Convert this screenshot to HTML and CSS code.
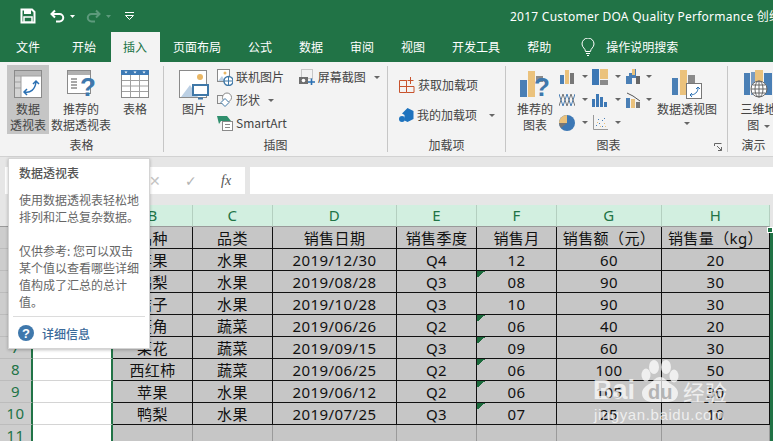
FILE: index.html
```html
<!DOCTYPE html>
<html lang="zh">
<head>
<meta charset="utf-8">
<title>Excel</title>
<link rel="stylesheet" href="styles.css">
</head>
<body>
<div class="app">
  <header class="titlebar">
    <div class="qat">
      <svg class="q-save" width="16" height="16" viewBox="0 0 16 16"><path d="M1.500 1.500h10.500l2.500 2.500v10.500h-13z" fill="none" stroke="#fff" stroke-width="2"/><rect x="4" y="2" width="7" height="4" fill="#fff"/><rect x="4" y="9" width="8" height="5" fill="#217346" stroke="#fff" stroke-width="1.500"/></svg>
      <svg class="q-undo" width="16" height="14" viewBox="0 0 16 14"><path d="M5 1.500 1.500 5 5 8.500M2 5h7.500a3.500 3.500 0 0 1 0 7.500H6" fill="none" stroke="#fff" stroke-width="2"/></svg>
      <svg class="q-caret" width="5" height="3" viewBox="0 0 5 3"><path d="M0 0h5L2.500 3z" fill="#fff"/></svg>
      <svg class="q-redo" width="16" height="14" viewBox="0 0 16 14"><path d="M11 1.500 14.500 5 11 8.500M14 5H6.500a3.500 3.500 0 0 0 0 7.500H10" fill="none" stroke="#5d9a7c" stroke-width="2"/></svg>
      <svg class="q-caret2" width="5" height="3" viewBox="0 0 5 3"><path d="M0 0h5L2.500 3z" fill="#5d9a7c"/></svg>
      <svg class="q-more" width="9" height="8" viewBox="0 0 9 8"><path d="M0 .5h9M.5 3.500h8L4.500 7.500z" fill="none" stroke="#fff"/></svg>
    </div>
    <div class="doc-title">2017 Customer DOA Quality Performance 创维</div>
  </header>

  <nav class="tabs">
    <span class="tab tab-first">文件</span>
    <span class="tab tab-second">开始</span>
    <span class="tab tab-active">插入</span>
    <span class="tab">页面布局</span>
    <span class="tab">公式</span>
    <span class="tab">数据</span>
    <span class="tab">审阅</span>
    <span class="tab">视图</span>
    <span class="tab">开发工具</span>
    <span class="tab">帮助</span>
    <svg class="lamp" width="14" height="18" viewBox="0 0 14 18"><path d="M4.500 13.500C4.500 10.500 1 9.500 1 6a6 6 0 0 1 12 0c0 3.500-3.500 4.500-3.500 7.500zM5 15.500h4M6 17.500h2" fill="none" stroke="#fff"/></svg>
    <span class="tab tab-search">操作说明搜索</span>
  </nav>

  <section class="ribbon">
    <div class="group group-tables">
      <div class="group-body">
        <div class="big big-pivot">
          <svg width="28" height="28" viewBox="0 0 28 28"><rect x=".5" y=".5" width="27" height="27" fill="#fff" stroke="#8a8a8a"/><rect x="1" y="1" width="26" height="5" fill="#b9b9b9"/><rect x="1" y="6" width="6" height="21" fill="#d4d4d4"/><path d="M7 6v21M1 6h26M1 12h6M1 18h6" stroke="#a0a0a0" fill="none"/><path d="M11 22c5 1 10-2 11-10M19 14l3-3 3 3M13 19l-3 3 3 3" fill="none" stroke="#2a70b3" stroke-width="1.500"/></svg>
          <span class="label">数据<br>透视表</span>
        </div>
        <div class="big big-rec">
          <svg width="28" height="30" viewBox="0 0 28 30"><rect x=".5" y=".5" width="23" height="23" fill="#fff" stroke="#8a8a8a"/><path d="M1 3h22" stroke="#b0b0b0" stroke-width="4"/><path d="M4 9h6M4 12h6M4 15h6M4 18h6" stroke="#a8a8a8" stroke-width="2"/><text class="qmark" x="13" y="26">?</text></svg>
          <span class="label">推荐的<br>数据透视表</span>
        </div>
        <div class="big big-table">
          <svg width="28" height="28" viewBox="0 0 28 28"><rect x=".5" y=".5" width="27" height="27" fill="#fff" stroke="#8a8a8a"/><rect x="0" y="0" width="28" height="5" fill="#3d7ab5"/><path d="M1 10.500h26M1 16h26M1 21.500h26M9.500 5v22M18.500 5v22" stroke="#a0a0a0" fill="none"/><path d="M3.500 1.500h3L5 3.500zM12.500 1.500h3L14 3.500zM21.500 1.500h3L23 3.500z" fill="#fff"/></svg>
          <span class="label">表格</span>
        </div>
      </div>
      <div class="group-name">表格</div>
    </div>

    <div class="group group-illus">
      <div class="group-body">
        <div class="big big-pic">
          <svg width="30" height="30" viewBox="0 0 30 30"><rect x=".5" y=".5" width="27" height="27" fill="#fff" stroke="#8a8a8a"/><circle cx="21" cy="7" r="3" fill="#eab765"/><path d="M2 27 11 15l8 12z" fill="#bcd0e4"/><rect x="14" y="15" width="15" height="10" fill="#fff" stroke="#3f78a8" stroke-width="2"/><path d="M19 28.500h5" stroke="#3f78a8" stroke-width="2"/></svg>
          <span class="label">图片</span>
        </div>
        <div class="small-col">
          <div class="small"><svg width="16" height="17" viewBox="0 0 16 17"><rect x=".5" y=".5" width="12" height="12" fill="#fff" stroke="#8a8a8a"/><circle cx="8" cy="4" r="1.500" fill="#eab765"/><path d="M1 12l4-5 3 5z" fill="#bcd0e4"/><circle cx="11.500" cy="12" r="4.500" fill="#fff" stroke="#3f78a8" stroke-width="1.500"/><path d="M7.500 12h8M11.500 8v8" stroke="#3f78a8"/></svg><span>联机图片</span></div>
          <div class="small"><svg width="16" height="16" viewBox="0 0 16 16"><rect x=".5" y="3.500" width="8" height="8" fill="none" stroke="#8a8a8a"/><circle cx="10" cy="5.500" r="4.500" fill="#fff" stroke="#8a8a8a"/><path d="M8 6.500l4 4-4 4-4-4z" fill="#fff" stroke="#3f78a8"/></svg><span>形状</span><i class="caret"></i></div>
          <div class="small"><svg width="16" height="16" viewBox="0 0 16 16"><path d="M0 1h10l4 5H4L2 9z" fill="#2f8f6d"/><rect x="5.500" y="6.500" width="10" height="9" fill="#fff" stroke="#8a8a8a"/><path d="M8 9.500h5M8 12.500h5" stroke="#8a8a8a"/></svg><span>SmartArt</span></div>
        </div>
        <div class="small-col col-shot">
          <div class="small"><svg width="16" height="16" viewBox="0 0 16 16"><rect x="2.500" y=".5" width="11" height="9" fill="none" stroke="#9a9a9a" stroke-dasharray="1 1"/><rect x="0" y="8" width="9" height="7" fill="#6f6f6f"/><circle cx="4.500" cy="11.500" r="1.800" fill="#fff"/><path d="M9 13h7M12.500 9.500v7" stroke="#2a70b3" stroke-width="1.600"/></svg><span>屏幕截图</span><i class="caret"></i></div>
        </div>
      </div>
      <div class="group-name">插图</div>
    </div>

    <div class="group group-addins">
      <div class="group-body addins">
        <div class="small"><svg width="16" height="16" viewBox="0 0 16 16"><path d="M.5 3.500h7v12h-7zM.5 9.500h14.500v6H7.500M7.500 9.500v-6M11.500 0v7M8.500 3.500h6" fill="none" stroke="#c8532d"/></svg><span>获取加载项</span></div>
        <div class="small"><svg width="15" height="15" viewBox="0 0 15 15"><path d="M8.500 0l6 3v8l-6 3-3-1.500V7L3 5.500z" fill="#1e73be"/><circle cx="3" cy="11" r="3" fill="#1e73be"/></svg><span>我的加载项</span><i class="caret caret-wide"></i></div>
      </div>
      <div class="group-name">加载项</div>
    </div>

    <div class="group group-charts">
      <div class="group-body">
        <div class="big big-recchart">
          <svg width="30" height="30" viewBox="0 0 30 30"><rect x="0" y="10" width="7" height="17" fill="#4a7fb5"/><rect x="8" y="1" width="7" height="26" fill="#ebc27c"/><rect x="16" y="6" width="7" height="6" fill="#8a8a8a"/><text class="qmark" x="14" y="26">?</text></svg>
          <span class="label">推荐的<br>图表</span>
        </div>
        <div class="chart-grid">
          <div class="ci"><svg width="14" height="14" viewBox="0 0 14 14"><rect x="0" y="5" width="4" height="9" fill="#4a7fb5"/><rect x="5" y="0" width="4" height="14" fill="#ebc27c"/><rect x="10" y="3" width="4" height="11" fill="#777"/></svg><i class="caret"></i></div>
          <div class="ci"><svg width="16" height="16" viewBox="0 0 16 16"><rect x="0" y="0" width="7" height="16" fill="#3d78b5"/><rect x="8" y="0" width="8" height="10" fill="#ebc27c"/><rect x="8" y="11" width="8" height="5" fill="#8a8a8a"/></svg><i class="caret"></i></div>
          <div class="ci"><svg width="15" height="15" viewBox="0 0 15 15"><path d="M0 15V7h3V4h3v11zM6 0h4v9H6z" fill="#4a7fb5"/><path d="M6 0h3v6H6z" fill="#ebc27c"/><path d="M10 7h4v8h-4z" fill="#666"/></svg><i class="caret"></i></div>
          <div class="ci"><svg width="16" height="16" viewBox="0 0 16 16"><path d="M0 2l4 12 4-12 4 12 4-12" fill="none" stroke="#4a7fb5"/><path d="M0 14l4-12 4 12 4-12 4 12" fill="none" stroke="#777"/></svg><i class="caret"></i></div>
          <div class="ci"><svg width="16" height="14" viewBox="0 0 16 14"><rect x="0" y="6" width="3" height="8" fill="#3d78b5"/><rect x="4" y="1" width="3" height="13" fill="#3d78b5"/><rect x="8" y="4" width="3" height="10" fill="#3d78b5"/><rect x="12" y="9" width="3" height="5" fill="#3d78b5"/></svg><i class="caret"></i></div>
          <div class="ci"><svg width="15" height="16" viewBox="0 0 15 16"><rect x="0" y="6" width="4" height="10" fill="#4a7fb5"/><rect x="5" y="7" width="4" height="9" fill="#ebc27c"/><rect x="10" y="10" width="4" height="6" fill="#777"/><path d="M1 1l6 3 7 5" fill="none" stroke="#555"/></svg><i class="caret"></i></div>
          <div class="ci"><svg width="16" height="16" viewBox="0 0 16 16"><circle cx="8" cy="8" r="8" fill="#3d78b5"/><path d="M8 8V0A8 8 0 0 0 0 8z" fill="#ebc27c"/><path d="M8 8H0a8 8 0 0 0 2 5z" fill="#777"/></svg><i class="caret"></i></div>
          <div class="ci"><svg width="15" height="15" viewBox="0 0 15 15"><path d="M.5 0v14.500H15" fill="none" stroke="#999"/><path d="M3 10h1v1H3zM6 8h1v1H6zM9 5h1v1H9zM11 3h1v1h-1zM5 4h1v1H5zM9 11h1v1H9z" fill="#4a7fb5"/><path d="M4 7h1v1H4zM7 11h1v1H7zM11 8h1v1h-1zM12 11h1v1h-1z" fill="#ebc27c"/></svg><i class="caret"></i></div>
        </div>
        <div class="big big-pivotchart">
          <svg width="30" height="30" viewBox="0 0 30 30"><rect x="0" y="8" width="6" height="17" fill="#4a7fb5"/><rect x="8" y="0" width="7" height="25" fill="#ebc27c"/><rect x="16" y="5" width="7" height="10" fill="#8a8a8a"/><rect x="14.500" y="13.500" width="15" height="15" fill="#fff" stroke="#777"/><path d="M18 25c5 0 8-3 8-7M24 19l2-2 2 2M20 23l-2 2 2 2" fill="none" stroke="#2a70b3"/></svg>
          <span class="label">数据透视图</span>
          <i class="caret caret-below"></i>
        </div>
      </div>
      <div class="group-name group-name-charts">图表</div>
      <svg class="launcher" width="8" height="8" viewBox="0 0 8 8"><path d="M.5 3V.5H7.500M7.500 7.500 3 3M7.500 4v3.500H4" fill="none" stroke="#666"/></svg>
    </div>

    <div class="group group-tours">
      <div class="group-body">
        <div class="big big-map">
          <svg width="30" height="30" viewBox="0 0 30 30"><rect x="0" y="3" width="6" height="22" fill="#4a7fb5"/><rect x="7" y="2" width="6" height="23" fill="#7a9cc2"/><rect x="11" y="0" width="8" height="25" fill="#ebc27c"/><rect x="20" y="3" width="8" height="22" fill="#4a7fb5"/><circle cx="15" cy="19" r="8" fill="#fff" stroke="#666"/><path d="M7 19h16M15 11v16M9 15h12M9 23h12" stroke="#666" fill="none"/><ellipse cx="15" cy="19" rx="4" ry="8" fill="none" stroke="#666"/></svg>
          <span class="label">三维地<br>图 <i class="caret caret-inline"></i></span>
        </div>
      </div>
      <div class="group-name group-name-tours">演示</div>
    </div>
  </section>

  <section class="formula">
    <div class="namebox"></div>
    <div class="fx-btns">
      <span class="fx-x">✕</span>
      <span class="fx-ok">✓</span>
      <span class="fx-f">fx</span>
    </div>
    <div class="fx-input"></div>
  </section>

  <section class="sheet">
    <table class="grid">
      <colgroup>
        <col class="c0"><col class="ca"><col class="cb"><col class="cc"><col class="cd"><col class="ce"><col class="cf"><col class="cg"><col class="ch"><col>
      </colgroup>
      <thead>
        <tr><th class="corner"></th><th class="colh">A</th><th class="colh">B</th><th class="colh">C</th><th class="colh">D</th><th class="colh">E</th><th class="colh">F</th><th class="colh">G</th><th class="colh">H</th><th class="rest"></th></tr>
      </thead>
      <tbody>
        <tr><th class="rowh">2</th><td class="a"></td><td>品种</td><td>品类</td><td>销售日期</td><td>销售季度</td><td>销售月</td><td>销售额（元）</td><td>销售量（kg）</td><td class="rest"></td></tr>
        <tr><th class="rowh">3</th><td class="a"></td><td>苹果</td><td>水果</td><td>2019/12/30</td><td>Q4</td><td>12</td><td>60</td><td>20</td><td class="rest"></td></tr>
        <tr><th class="rowh">4</th><td class="a"></td><td>鸭梨</td><td>水果</td><td>2019/08/28</td><td>Q3</td><td class="flag">08</td><td>90</td><td>30</td><td class="rest"></td></tr>
        <tr><th class="rowh">5</th><td class="a"></td><td>桔子</td><td>水果</td><td>2019/10/28</td><td>Q3</td><td>10</td><td>90</td><td>30</td><td class="rest"></td></tr>
        <tr><th class="rowh">6</th><td class="a"></td><td>菱角</td><td>蔬菜</td><td>2019/06/26</td><td>Q2</td><td class="flag">06</td><td>40</td><td>20</td><td class="rest"></td></tr>
        <tr><th class="rowh">7</th><td class="a"></td><td>菜花</td><td>蔬菜</td><td>2019/09/15</td><td>Q3</td><td class="flag">09</td><td>60</td><td>30</td><td class="rest"></td></tr>
        <tr><th class="rowh">8</th><td class="a"></td><td>西红柿</td><td>蔬菜</td><td>2019/06/25</td><td>Q2</td><td class="flag">06</td><td>100</td><td>50</td><td class="rest"></td></tr>
        <tr><th class="rowh">9</th><td class="a"></td><td>苹果</td><td>水果</td><td>2019/06/12</td><td>Q2</td><td class="flag">06</td><td>105</td><td>30</td><td class="rest"></td></tr>
        <tr><th class="rowh">10</th><td class="a"></td><td>鸭梨</td><td>水果</td><td>2019/07/25</td><td>Q3</td><td class="flag">07</td><td>25</td><td>10</td><td class="rest"></td></tr>
        <tr class="empty"><th class="rowh">11</th><td class="a"></td><td></td><td></td><td></td><td></td><td></td><td></td><td></td><td class="rest"></td></tr>
      </tbody>
    </table>
    <div class="sel-right"></div>
    <div class="sel-handle"></div>
  </section>

  <aside class="tip">
    <div class="tip-title">数据透视表</div>
    <p class="tip-p">使用数据透视表轻松地<br>排列和汇总复杂数据。</p>
    <p class="tip-p">仅供参考: 您可以双击<br>某个值以查看哪些详细<br>值构成了汇总的总计<br>值。</p>
    <div class="tip-more"><svg width="16" height="16" viewBox="0 0 16 16"><circle cx="8" cy="8" r="8" fill="#3f78ac"/><text class="tip-q" x="8" y="12.500">?</text></svg><span>详细信息</span></div>
  </aside>

  <div class="mark">
    <svg class="paw" width="40" height="46" viewBox="0 0 40 46"><g fill="#fff" opacity=".72"><ellipse cx="6" cy="15" rx="4.500" ry="6.500"/><ellipse cx="14" cy="7" rx="5" ry="7"/><ellipse cx="26" cy="7" rx="5" ry="7"/><ellipse cx="34" cy="16" rx="4.500" ry="6.500"/><path d="M20 17c5 0 7 5 11 7 5 3 7 6 7 9 0 7-6 9-11 9H13c-5 0-11-2-11-9 0-3 2-6 7-9 4-2 6-7 11-7z"/></g></svg>
    <span class="mark-bai">Bai</span>
    <span class="mark-du">du</span>
    <span class="mark-jy">经验</span>
    <span class="mark-url">jingyan.baidu.com</span>
  </div>
</div>
</body>
</html>
```
FILE: styles.css
```css
* { box-sizing: border-box; }
html, body { margin: 0; padding: 0; }
body {
  width: 773px;
  height: 441px;
  overflow: hidden;
  font-family: "Noto Sans CJK SC", "Noto Sans", sans-serif;
  background: #fff;
}
.app { position: relative; width: 773px; height: 441px; overflow: hidden; }

/* title bar */
.titlebar {
  height: 32px;
  background: #217346;
  display: flex;
  align-items: center;
  color: #fff;
  overflow: hidden;
}
.qat { display: flex; align-items: center; padding-left: 20px; width: 510px; flex: none; }
.q-undo { margin-left: 14px; }
.q-caret { margin-left: 4px; }
.q-redo { margin-left: 10px; }
.q-caret2 { margin-left: 5px; }
.q-more { margin-left: 14px; }
.doc-title {
  font-family: "Noto Sans", "Noto Sans CJK SC", sans-serif;
  font-size: 12px;
  white-space: nowrap;
  letter-spacing: .25px;
  flex: none;
}

/* tabs */
.tabs {
  height: 30px;
  background: #217346;
  display: flex;
  align-items: stretch;
  gap: 1px;
  color: #fff;
  font-size: 12px;
  line-height: 30px;
}
.tab { padding: 0 13px; white-space: nowrap; }
.tab-first { margin-left: 3px; }
.tab-second { margin-left: 5px; }
.tab-active { background: #f3f3f3; color: #217346; padding: 0 12px; margin: 0 -1px 0 1px; width: 49px; }
.lamp { align-self: center; margin-left: 16px; flex: none; }
.tab-search { padding-left: 10px; }

/* ribbon */
.ribbon {
  height: 95px;
  background: #f3f3f3;
  border-bottom: 1px solid #d2d2d2;
  display: flex;
  align-items: flex-start;
  color: #444;
  font-size: 12px;
}
.group {
  position: relative;
  display: flex;
  flex-direction: column;
  flex: none;
  height: 86px;
  margin-top: 4px;
  border-right: 1px solid #c6c6c6;
}
.group-tables { width: 164px; }
.group-illus { width: 224px; }
.group-addins { width: 118px; }
.group-charts { width: 222px; }
.group-tours { width: 45px; border-right: 0; }
.group-body { flex: 1; display: flex; min-height: 0; }
.group-name { height: 14px; line-height: 14px; text-align: center; color: #444; flex: none; }
.group-name-charts { padding-right: 16px; }
.group-name-tours { padding-left: 6px; }

.big {
  display: flex;
  flex-direction: column;
  align-items: center;
  flex: none;
  text-align: center;
  line-height: 16px;
  white-space: nowrap;
}
.big svg { flex: none; }
.label { display: block; }
.big-pivot {
  width: 42px;
  height: 69px;
  margin: -1px 0 0 7px;
  padding-top: 5px;
  background: #c5c5c5;
}
.big-pivot .label { margin-top: 3px; }
.big-rec { width: 60px; margin-left: 2px; padding-top: 4px; }
.big-rec .label { margin-top: 1px; }
.big-table { width: 44px; margin-left: 2px; padding-top: 4px; }
.big-table .label { margin-top: 3px; }
.big-pic { width: 34px; margin-left: 13px; padding-top: 4px; }
.big-pic .label { margin-top: 1px; }

.small-col { display: flex; flex-direction: column; gap: 1px; margin-left: 6px; }
.col-shot { margin-left: 12px; }
.small {
  display: flex;
  align-items: center;
  gap: 3px;
  height: 22px;
  white-space: nowrap;
  font-size: 12px;
  line-height: 16px;
}
.small svg { flex: none; }
.caret {
  display: inline-block;
  width: 0;
  height: 0;
  margin-left: 5px;
  border-left: 3px solid transparent;
  border-right: 3px solid transparent;
  border-top: 3px solid #666;
}
.caret-wide { margin-left: 9px; }
.caret-below { display: block; margin: 5px auto 0; }
.caret-inline { vertical-align: middle; margin-left: 2px; }
.addins { flex-direction: column; padding: 8px 0 0 11px; gap: 8px; }
.qmark {
  font-family: "Liberation Sans", sans-serif;
  font-size: 26px;
  font-weight: 700;
  fill: #3f78ac;
}
.big-recchart { width: 40px; margin-left: 9px; padding-top: 4px; }
.big-recchart .label { margin-top: 1px; }
.chart-grid {
  display: grid;
  grid-template-columns: 33px 33px 28px;
  grid-auto-rows: 23px;
  margin: -1px 0 0 3px;
}
.ci { display: grid; grid-template-columns: 18px auto; justify-items: center; align-items: center; }
.ci .caret { margin-left: 3px; }
.big-pivotchart { width: 64px; margin-left: 3px; padding-top: 4px; }
.big-pivotchart .label { margin-top: 1px; }
.big-map { width: 45px; padding-top: 4px; margin-left: 8px; }
.big-map .label { margin-top: 1px; }
.launcher { position: absolute; right: 5px; bottom: 1px; }

/* formula bar */
.formula {
  height: 48px;
  background: #e6e6e6;
  display: flex;
  align-items: flex-start;
  padding: 10px 0 0 5px;
}
.namebox { width: 130px; height: 27px; background: #fff; flex: none; }
.fx-btns {
  width: 110px;
  height: 27px;
  background: #fff;
  flex: none;
  display: flex;
  align-items: center;
  color: #c4c4c4;
  font-size: 14px;
  padding-left: 14px;
  font-family: "DejaVu Sans", sans-serif;
}
.fx-x { width: 36px; }
.fx-ok { width: 36px; color: #b4b4b4; }
.fx-f { font-family: "Liberation Serif", serif; font-style: italic; color: #555; font-size: 14px; }
.fx-input { flex: 1; height: 27px; margin-left: 5px; background: #fff; }

/* sheet */
.sheet { position: relative; height: 236px; overflow: hidden; background: #fff; }
.grid {
  border-collapse: separate;
  border-spacing: 0;
  table-layout: fixed;
  width: 773px;
  font-size: 15px;
  color: #111;
  font-family: "Noto Sans", "Noto Sans CJK SC", sans-serif;
  letter-spacing: .4px;
}
.c0 { width: 33px; }
.ca { width: 80px; }
.cb { width: 80px; }
.cc { width: 80px; }
.cd { width: 124px; }
.ce { width: 80px; }
.cf { width: 80px; }
.cg { width: 105px; }
.ch { width: 108px; }
.grid th, .grid td { padding: 0; height: 22px; line-height: 21px; font-weight: 400; text-align: center; white-space: nowrap; }
.grid td { padding-top: 2px; line-height: 19px; }
.colh {
  background: #d2efe0;
  color: #217346;
  font-size: 15px;
  border-right: 1px solid #b4cfc0;
  border-bottom: 1px solid #9a9a9a;
}
.corner { background: #e6e6e6; border-bottom: 1px solid #9a9a9a; }
.rowh {
  background: #cdcdcd;
  color: #217346;
  border-right: 2px solid #217346;
  border-bottom: 1px solid #bcbcbc;
  font-size: 15px;
}
.grid td {
  background: #c6c6c6;
  border-right: 1px solid #111;
  border-bottom: 1px solid #111;
}
.grid td.a {
  background: #fff;
  border-right: 2px solid #217346;
  border-bottom: 1px solid #d4d4d4;
}
.grid th.rest { background: #e6e6e6; }
.grid td.rest { background: #fff; border: 0; }
.empty td { border-right-color: #9a9a9a; border-bottom: 0; }
.grid td.flag {
  background-color: #c6c6c6;
  background-image: linear-gradient(140deg, #1b6a3c 50%, transparent 50%);
  background-size: 8px 7px;
  background-repeat: no-repeat;
}
.sel-right { position: absolute; left: 770px; top: 22px; width: 3px; height: 214px; background: #217346; }
.sel-handle { position: absolute; left: 767px; top: 22px; width: 6px; height: 6px; background: #217346; border: 1px solid #fff; }

/* tooltip */
.tip {
  position: absolute;
  left: 8px;
  top: 158px;
  width: 142px;
  height: 191px;
  background: #fff;
  border: 1px solid #d4d4d4;
  box-shadow: 0 1px 3px rgba(0,0,0,.25);
  padding: 6px 10px 0 10px;
  color: #666;
  font-size: 12px;
  line-height: 17px;
}
.tip-title { font-weight: 500; color: #555; margin-bottom: 10px; line-height: 16px; }
.tip-p { margin: 0 0 17px; }
.tip-more {
  position: absolute;
  left: 4px;
  right: 4px;
  top: 157px;
  height: 33px;
  border-top: 1px solid #dcdcdc;
  display: flex;
  align-items: center;
  gap: 8px;
  padding-left: 5px;
  color: #3b6a9a;
  font-weight: 500;
}
.tip-q { font-family: "Liberation Sans", sans-serif; font-size: 13px; font-weight: 700; fill: #fff; text-anchor: middle; }

/* watermark */
.mark {
  position: absolute;
  left: 590px;
  top: 355px;
  width: 150px;
  height: 80px;
  color: rgba(255,255,255,.72);
  font-family: "Liberation Sans", sans-serif;
}
.paw { position: absolute; left: 50px; top: 5px; }
.mark-bai { position: absolute; left: 3px; top: 20px; font-size: 27px; font-weight: 700; line-height: 30px; }
.mark-du { position: absolute; left: 58px; top: 24px; font-size: 20px; font-weight: 700; line-height: 26px; color: #b4b4b4; }
.mark-jy { position: absolute; left: 93px; top: 21px; font-size: 22px; line-height: 30px; font-family: "Noto Sans CJK SC", sans-serif; }
.mark-url { position: absolute; left: 4px; top: 50px; font-size: 15px; line-height: 20px; letter-spacing: .6px; }
```
